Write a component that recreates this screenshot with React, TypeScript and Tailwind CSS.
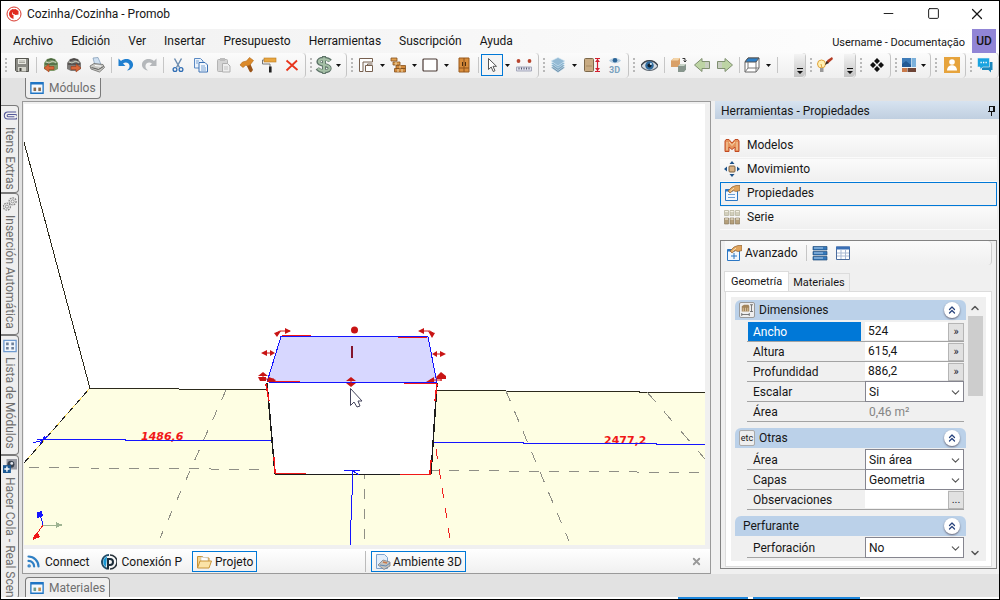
import { ReactNode, useState } from 'react';
import { ChevronDown, ChevronUp, ChevronsUp, Minus, Rss, Square, X } from 'lucide-react';

interface IconProps {
  children: ReactNode;
  size?: string;
}

function Icon({ children, size = 'w-4 h-4' }: IconProps) {
  return (
    <svg viewBox="0 0 16 16" className={`${size} shrink-0`} fill="none" aria-hidden="true">
      {children}
    </svg>
  );
}

const SaveIcon = () => (
  <Icon>
    <path d="M1.500 1.500h13v13h-12l-1-1z" fill="#8a8a84" stroke="#55554f" />
    <path d="M4 2h8v5H4z" fill="#e9e9e2" />
    <path d="M5 4h6M5 5.500h6" stroke="#a9a9a0" />
    <path d="M4 10h8v4.500H4z" fill="#d5d5cc" />
    <path d="M5.500 11h2v3h-2z" fill="#44443f" />
  </Icon>
);

// round module sphere with a red arrow, used for import and export
const ModuleIcon = ({ out = false }: { out?: boolean }) => (
  <Icon>
    <path d="M1 6l3-4 4-1 4 1 3 4v6l-4 2H5l-4-2z" fill={out ? '#7d7a78' : '#7f9a6a'} />
    <path d="M4 3.500l4-1.500 4 1.500M2 7h12" stroke={out ? '#4c4846' : '#4b6840'} strokeWidth="1.500" />
    <path d="M3 5l3 1 4-2 3 2" stroke="#c9d2c0" />
    {out ? (
      <path d="M5 9.500h5V7l5 4-5 4v-2.500H5z" fill="#d9683a" stroke="#a03c1a" strokeWidth=".6" />
    ) : (
      <path d="M11 9.500H6V7l-5 4 5 4v-2.500h5z" fill="#d9683a" stroke="#a03c1a" strokeWidth=".6" />
    )}
  </Icon>
);

const PrintIcon = () => (
  <Icon>
    <path d="M4 1l5-.5 3 7-6 1z" fill="#cfe0f1" stroke="#7d96b1" strokeWidth=".7" />
    <path d="M1 9l4-2.500 9 1 1.500 3-5 4.500L2 12z" fill="#c9c9c5" stroke="#6b6b68" strokeWidth=".8" />
    <path d="M2.500 10.500l7 2 5-3" stroke="#5c5c5a" />
    <path d="M6 8.500l6 .7" stroke="#fff" />
  </Icon>
);

const TurnIcon = ({ redo = false }: { redo?: boolean }) => (
  <Icon>
    {redo ? (
      <path d="M15.500 1.500v7.500H8.500l2.500-2.500C8.500 4.500 5 5.500 4.500 8.500c-.2 2 .5 3.500 2.500 5C3 13 .5 10 1 7 2 2 8.500.5 13 4z" fill="#b5b8bb" />
    ) : (
      <path d="M.5 1.500v7.500h7L5 6.500c2.500-2 6-1 6.500 2 .2 2-.5 3.500-2.500 5 4-.5 6.500-3.500 6-6.500C14 2 7.500.5 3 4z" fill="#1f7fd0" />
    )}
  </Icon>
);

const CutIcon = () => (
  <Icon>
    <path d="M4.500 1.500l5 9M11.500 1.500l-5 9" stroke="#6d8db0" strokeWidth="1.500" />
    <circle cx="5" cy="12.500" r="1.900" stroke="#2f6db4" strokeWidth="1.300" />
    <circle cx="11" cy="12.500" r="1.900" stroke="#2f6db4" strokeWidth="1.300" />
  </Icon>
);

const CopyIcon = () => (
  <Icon>
    <path d="M1.500 1.500h6l2.500 2.500v7H1.500z" fill="#eaf2fb" stroke="#5b8ac4" />
    <path d="M6 5.500h6l2.500 2.500v7H6z" fill="#f4f8fd" stroke="#3c72b5" />
    <path d="M8 9h4M8 11h5M8 13h5M3 4h3M3 6h2" stroke="#7ba3d3" />
  </Icon>
);

const PasteIcon = () => (
  <Icon>
    <rect x="1.500" y="2.500" width="10" height="12" rx="1" fill="#d4d4d4" stroke="#b4b4b4" />
    <path d="M4 1h5v3H4z" fill="#bdbdbd" />
    <path d="M6.500 6.500h5L14 9v6H6.500z" fill="#eee" stroke="#b0b0b0" />
    <path d="M8 10h4M8 12h4" stroke="#c4c4c4" />
  </Icon>
);

const HammerIcon = () => (
  <Icon>
    <path d="M7 7l3-3 4 9-2 2.500-1.500-1z" fill="#9a5418" />
    <path d="M1 8l2.500-3 4-1 3-3.500 4 3L11 8l-2.500 1L7 8l-3 2.500z" fill="#dc8a2a" stroke="#b06a1a" strokeWidth=".6" />
  </Icon>
);

const RollerIcon = () => (
  <Icon>
    <rect x="3" y="1" width="12" height="4" fill="#e8a640" stroke="#b97b1e" strokeWidth=".6" />
    <path d="M3 3H1.500v4H9v3" stroke="#777" />
    <rect x="8" y="9.500" width="2.600" height="6" fill="#222" />
  </Icon>
);

const DeleteIcon = () => (
  <Icon>
    <path d="M2.500 3.500l11 9.500M13 3.500l-10.500 10" stroke="#e8351c" strokeWidth="1.800" />
  </Icon>
);

const DollarIcon = () => (
  <Icon size="w-[18px] h-[18px]">
    <path d="M13.500 4.500C12 2.500 9.500 2.500 7.500 2.500c-3 0-4.500 1-4.500 2.700C3 9 13 7 13 10.800c0 1.700-2 2.700-5 2.700-2.500 0-4.500-.5-6-2.500M8 0v16" stroke="#5d7368" strokeWidth="3.600" />
    <path d="M13 4.700C12 3 9.500 2.800 7.500 2.800c-2.500 0-4 .8-4 2.300C3.500 8.500 13 7 13 10.800c0 1.600-2 2.400-5 2.400-2.300 0-4-.5-5.500-2.200M8 1v14" stroke="#a5c0a6" strokeWidth="2" />
  </Icon>
);

const PlanIcon = () => (
  <Icon>
    <path d="M1.500 14.500v-13h13V5H5v9.500z" fill="#fff" stroke="#77604f" />
    <path d="M7.500 8.500h7v6h-7z" fill="#fff" stroke="#77604f" />
    <path d="M9.500 8.500v-1.500h5" stroke="#77604f" />
  </Icon>
);

const BricksIcon = () => (
  <Icon>
    <path d="M1 1h6v3H1zM3 5h7v3H3z" fill="#e0a050" stroke="#85501c" strokeWidth=".8" />
    <path d="M6 8.500h9.500v3H6zM4.500 11.500h11v3.500h-11z" fill="#d28a3c" stroke="#85501c" strokeWidth=".8" />
    <path d="M10 8.500v3M8 12v3M12 12v3M6 5v3" stroke="#f3dcae" />
  </Icon>
);

const RectIcon = () => (
  <Icon>
    <rect x="1" y="2" width="14" height="12" rx="1" fill="#fff" stroke="#4b3a35" strokeWidth="1.200" />
  </Icon>
);

const CabinetIcon = () => (
  <Icon>
    <path d="M3 1h10v14H3z" fill="#d88d3c" stroke="#9a5a1c" />
    <path d="M8 1v14M3 11h10" stroke="#8f531a" />
    <path d="M6.500 5v4M9.500 5v4" stroke="#4c2d10" />
  </Icon>
);

const CursorIcon = () => (
  <Icon>
    <path d="M4.500 1.500v11l2.700-2.500 2 4.500 1.800-.8-2-4.400h3.500z" fill="#fff" stroke="#555" />
  </Icon>
);

const MeasureIcon = () => (
  <Icon>
    <path d="M.5 10h15v4H.5z" fill="#dfe2ee" stroke="#a4a7ba" />
    <path d="M3 10.500v2M5.500 10.500v2M8 10.500v2M10.500 10.500v2M13 10.500v2" stroke="#53576c" />
    <circle cx="2.500" cy="4" r="1.900" fill="#b8452e" />
    <circle cx="13.500" cy="4" r="1.900" fill="#b8452e" />
  </Icon>
);

const LayersIcon = () => (
  <Icon>
    <path d="M8 8l7 2.500L8 15.500 1 10.500z" fill="#6e93ae" stroke="#dcecf6" strokeWidth=".5" />
    <path d="M8 5.500l7 3L8 13.500 1 8.500z" fill="#7ba3be" stroke="#dcecf6" strokeWidth=".6" />
    <path d="M8 3l7 3.200-7 5-7-5z" fill="#86b2cf" stroke="#dcecf6" strokeWidth=".6" />
    <path d="M8 .5l7 3.500-7 5-7-5z" fill="#94bad4" stroke="#dcecf6" strokeWidth=".6" />
  </Icon>
);

const HeightIcon = () => (
  <Icon>
    <rect x="0.500" y="1.500" width="9" height="13" rx="1" fill="#c8ab83" stroke="#7d684a" />
    <path d="M2 9h6" stroke="#a88c64" />
    <path d="M11 1.500h5M11 14.500h5M13.500 2v12" stroke="#d31f2f" strokeWidth="1.200" />
    <path d="M11 5l2.500-3L16 5M11 11l2.500 3 2.500-3" fill="#d31f2f" />
  </Icon>
);

const View3dIcon = () => (
  <Icon>
    <path d="M2 3.500C5 0 11 0 14 3.500 11 7 5 7 2 3.500z" fill="#b8d0e2" />
    <circle cx="8" cy="3.300" r="2.300" fill="#2c6496" />
    <text x="2" y="15.500" fontSize="9" fontWeight="700" fontFamily="Roboto" fill="#7aa2bf">3D</text>
  </Icon>
);

const EyeIcon = () => (
  <Icon size="w-[17px] h-[17px]">
    <path d="M0 8.500C4 2 12 2 16 8.500 12 14 4 14 0 8.500z" fill="#d5dbe2" stroke="#5f6872" />
    <path d="M0 8C4 2 12 2 16 8" stroke="#3e444c" strokeWidth="1.200" />
    <circle cx="8" cy="8" r="4" fill="#2f6b9e" />
    <circle cx="8" cy="8" r="1.900" fill="#10202f" />
    <circle cx="9.300" cy="6.500" r="1" fill="#cfe3f3" />
  </Icon>
);

const ReplaceIcon = () => (
  <Icon>
    <path d="M0 3.500L3 1h6v6l-2 3H0z" fill="#d9a068" />
    <path d="M0 3.500L3 1h6L7 3.500z" fill="#f3d4a8" />
    <path d="M7 9l3-2h5v5.500L13 15H7z" fill="#87968d" />
    <path d="M7 9l3-2h5l-2 2z" fill="#c8d4c8" />
    <path d="M11.500 1.500H14v3M12.500 3.500L14 5l1.500-1.500" stroke="#333" />
  </Icon>
);

const GreenArrow = ({ right = false }: { right?: boolean }) => (
  <Icon>
    <path
      d={right ? 'M.5 4.500H8V1.500l7.500 6.500L8 14.500v-3H.5z' : 'M15.500 4.500H8V1.500L.5 8 8 14.500v-3h7.500z'}
      fill="#bdd4a4"
      stroke="#7f8f70"
    />
    <path d={right ? 'M1 5h4v6H1z' : 'M11 5h4v6h-4z'} fill="#c9cfc2" />
  </Icon>
);

const CubeIcon = () => (
  <Icon>
    <path d="M1 5l3-4h11v10l-3 4H1z" fill="#fff" stroke="#666" />
    <path d="M1 5l3-4h11l-3 4z" fill="#2e80c9" stroke="#555" />
    <path d="M12 5v10M4 5v6h11M4 11l-3 4" stroke="#777" />
  </Icon>
);

const BulbIcon = () => (
  <Icon>
    <circle cx="4.500" cy="7" r="4" fill="#fff1b5" stroke="#e0a23a" />
    <path d="M3 11h3.500v4H3z" fill="#999" />
    <path d="M4 7l1 4" stroke="#e0a23a" />
    <path d="M8.500 6.500l2-3.500L15 0l1 2-4.500 4z" fill="#b43b22" />
    <path d="M8 8l1.500-4 2.500 2z" fill="#3c2c20" />
  </Icon>
);

const DiamondsIcon = () => (
  <Icon>
    <path d="M8 1l3 3-3 3-3-3zM8 9l3 3-3 3-3-3zM4 5l3 3-3 3-3-3zM12 5l3 3-3 3-3-3z" fill="#111" />
  </Icon>
);

const PaletteIcon = () => (
  <Icon>
    <path d="M1 1h9v9H1z" fill="#3f7cb8" />
    <path d="M10.500 1H15v9h-4.500z" fill="#7bb0da" />
    <path d="M1 11h5v4H1z" fill="#c97a4a" />
    <path d="M6.500 11h8.500v4H6.500z" fill="#6d4436" />
    <path d="M1 7l4-3 5 4v2H1z" fill="#235a94" />
  </Icon>
);

const UserIcon = () => (
  <Icon>
    <path d="M0 0h16v16H0z" fill="#e6a33c" />
    <circle cx="8" cy="5" r="2.800" fill="#fff" />
    <path d="M3 13.500c0-7 10-7 10 0z" fill="#fff" />
  </Icon>
);

const ChatIcon = () => (
  <Icon>
    <path d="M5 5h10.500v8H14v2.500L11.500 13H5z" fill="#1b87bd" />
    <path d="M.5 1h12v9H6l-3 2.500V10H.5z" fill="#19a3e0" stroke="#f4f4f4" strokeWidth=".6" />
    <path d="M3.500 5.500h1.300M6 5.500h1.300M8.500 5.500h1.300" stroke="#fff" strokeWidth="1.400" />
  </Icon>
);

const WindowIcon = ({ left = '#8b6b4c', right = '#8b6b4c' }) => (
  <Icon size="w-[14px] h-[14px]">
    <path d="M1 2h14v12H1z" fill="#f4f8fc" stroke="#1f74c4" strokeWidth="1.500" />
    <path d="M1 3h14" stroke="#1f74c4" strokeWidth="2" />
    <path d="M4 7.500h3v4H4z" fill={left} />
    <path d="M9.500 7.500h3v4h-3z" fill={right} />
  </Icon>
);

const ListIcon = () => (
  <Icon size="w-[14px] h-[14px]">
    <path d="M1 1.500h14v13H1z" fill="#f0f5fb" stroke="#6f9bd0" strokeWidth="1.500" />
    <path d="M3.500 4h3v3h-3zM3.500 9h3v3h-3zM9.500 4h3v3h-3zM9.500 9h3v3h-3z" fill="#6d7f98" />
  </Icon>
);

const ModelsIcon = () => (
  <Icon>
    <path d="M1 14.500V4l1-1.500h3L8 6l3-3.500h3L15 4v10.500h-4V10l-3 2.500L5 10v4.500z" fill="#e6935c" stroke="#c24a22" />
    <path d="M3 13V5M13 13V5M5 5l3 3.500L11 5" stroke="#f7d8ae" />
  </Icon>
);

const MoveIcon = () => (
  <Icon>
    <path d="M8 0l2.500 3h-5zM8 16l2.500-3h-5zM0 8l3-2.500v5zM16 8l-3-2.500v5z" fill="#1e5289" />
    <rect x="5" y="5" width="6" height="6" rx="1" fill="#d8b184" stroke="#7b6040" />
  </Icon>
);

const PropertiesIcon = ({ plus = false }: { plus?: boolean }) => (
  <Icon>
    <path d="M1.500 4.500h12v11h-12z" fill="#f2f7fd" stroke="#2b77c4" />
    <path d="M1.500 5.500H9" stroke="#2b77c4" strokeWidth="2" />
    {plus ? <path d="M8 8v6M5 11h6" stroke="#2b77c4" /> : <path d="M4 9.500h7M4 12.500h7" stroke="#6aa0d8" />}
    <path d="M4 6l4-4 4-1.500h4v5l-4 1-3-1-3 2.500z" fill="#dfa35c" stroke="#8f6230" strokeWidth=".7" />
    <path d="M6.500 6l3.500-3" stroke="#fbe3b8" />
  </Icon>
);

const SeriesIcon = () => (
  <Icon>
    <path d="M.5 1.500h4v5h-4zM6 1.500h4v5H6zM11.500 1.500h4v5h-4z" fill="#d2cfbd" stroke="#aba78f" strokeWidth=".6" />
    <path d="M.5 9h4v6h-4zM6 9h4v6H6zM11.500 9h4v6h-4z" fill="#b5a07c" stroke="#837355" strokeWidth=".6" />
    <path d="M1 2.500h3M6.500 2.500h3M12 2.500h3M1 10h3M6.500 10h3M12 10h3" stroke="#f4f1e4" />
  </Icon>
);

const RowsIcon = () => (
  <Icon>
    <path d="M1 1.500h14v3.500H1zM1 6.500h14V10H1zM1 11.500h14V15H1z" fill="#3579bb" stroke="#234f7d" strokeWidth=".7" />
    <path d="M2 3h9M2 8h9M2 13h9" stroke="#b7d3ee" />
  </Icon>
);

const TableIcon = () => (
  <Icon>
    <path d="M1.500 2h13v12.500h-13z" fill="#fff" stroke="#4a6c9e" />
    <path d="M1 3h14" stroke="#3a6fb5" strokeWidth="3" />
    <path d="M6 5v9M10.500 5v9M2 8h12M2 11h12" stroke="#a9b9d3" />
  </Icon>
);

const FolderIcon = () => (
  <Icon>
    <path d="M1.500 14V2.500h5l1 1.500H13v3" fill="#f5d590" stroke="#c99437" />
    <path d="M5 3l7 1v4H5z" fill="#fff" stroke="#bbb" strokeWidth=".5" />
    <path d="M1.500 14L4 7h11.500L13 14z" fill="#fbe3a7" stroke="#c99437" />
  </Icon>
);

const AmbientIcon = () => (
  <Icon>
    <path d="M1.500.5h8l3 3v11h-11z" fill="#e3eefb" stroke="#7ca2cf" />
    <path d="M3 11l5-5 7 2v4l-6 3.500z" fill="#c3c3c0" stroke="#74747a" strokeWidth=".7" />
    <path d="M5 11l6 1 4-3" stroke="#5f87b3" />
    <path d="M8 8l4 1" stroke="#c97a4a" strokeWidth="1.400" />
  </Icon>
);

const PromobIcon = () => (
  <Icon>
    <path d="M8 1a7 7 0 0 0-2 13.700" stroke="#1f4a66" strokeWidth="2" />
    <path d="M6 2.500a6 6 0 0 0-1 10.500z" fill="#1697d4" />
    <path d="M9 1a7 7 0 0 1 0 14" stroke="#27323a" strokeWidth="1.500" />
    <path d="M7 15.500V5h2a3 3 0 0 1 0 6H7" stroke="#1c2d39" strokeWidth="2" />
  </Icon>
);

const AppLogo = () => (
  <Icon>
    <circle cx="8" cy="8" r="7" fill="#fff" stroke="#d8362b" strokeWidth="1" />
    <path d="M7.500 3v10C5 12.500 3 10.500 3 8c0-2.500 2-5 4.500-5z" fill="#e02a20" />
    <path d="M7 3.500L9.500 3l3 2v3.500L9.500 9 7 8z" fill="#e02a20" />
    <path d="M6.500 6.500v2h2" stroke="#fff" strokeWidth=".8" />
  </Icon>
);

const ClipIcon = () => (
  <Icon size="w-[14px] h-[14px]">
    <path d="M15 3.500H5.500a4 4 0 0 0 0 8H14a2.600 2.600 0 0 0 0-5.200H6a1.300 1.300 0 0 0 0 2.600h7" stroke="#55589a" strokeWidth="1.200" />
  </Icon>
);

const GearsIcon = () => (
  <Icon size="w-[14px] h-[14px]">
    <circle cx="11" cy="5" r="4" stroke="#888" strokeWidth="1.500" strokeDasharray="2 1" />
    <circle cx="11" cy="5" r="1.800" stroke="#888" />
    <circle cx="4.500" cy="11" r="4" stroke="#888" strokeWidth="1.500" strokeDasharray="2 1" />
    <circle cx="4.500" cy="11" r="1.800" stroke="#888" />
  </Icon>
);

const GlueIcon = () => (
  <Icon size="w-[14px] h-[14px]">
    <path d="M4 0h12v12H4z" fill="#9a9ca4" />
    <circle cx="9" cy="6" r="4" fill="#39424f" />
    <circle cx="10" cy="5" r="1.600" fill="#e5eaf2" />
    <path d="M0 7h9v9H0z" fill="#1d5a94" />
    <path d="M4.500 8.500v6M1.500 11.500h6" stroke="#fff" strokeWidth="1.600" />
  </Icon>
);

function ToolGroup({ children, className = '' }: { children: ReactNode; className?: string }) {
  return (
    <div className={`flex h-[25px] shrink-0 items-center rounded-r border-r border-[#c4c4c4] bg-linear-to-b from-[#fbfbfb] to-[#efefef] pb-px ${className}`}>
      <span className="flex w-[9px] shrink-0 flex-col items-center gap-[2px]">
        {[0, 1, 2, 3].map((dot) => (
          <i key={dot} className="h-[2px] w-[2px] bg-[#b9b9b9]" />
        ))}
      </span>
      {children}
    </div>
  );
}

function Tool({ label, children, className = 'w-[23px]' }: { label: string; children: ReactNode; className?: string }) {
  return (
    <button type="button" aria-label={label} className={`flex h-[22px] shrink-0 items-center justify-center ${className}`}>
      {children}
    </button>
  );
}

function Caret({ className = 'w-3' }: { className?: string }) {
  return (
    <button type="button" aria-label="Más" className={`flex h-[22px] shrink-0 items-center justify-center ${className}`}>
      <svg viewBox="0 0 5 3" className="h-[3px] w-[5px]">
        <path d="M0 0h5L2.500 3z" fill="#111" />
      </svg>
    </button>
  );
}

const Divider = () => (
  <span className="flex w-[6px] shrink-0 justify-center">
    <i className="h-4 w-px bg-[#c6c6c6]" />
  </span>
);

const Overflow = () => (
  <button type="button" aria-label="Opciones de barra" className="flex h-[23px] w-[11px] shrink-0 items-end justify-center rounded-br bg-linear-to-b from-[#f4f4f4] to-[#c4c4c4] pb-[3px]">
    <svg viewBox="0 0 6 6" className="h-[6px] w-[6px]">
      <path d="M0 0h6v1H0zM0 3h6L3 6z" fill="#111" />
    </svg>
  </button>
);

function Toolbar() {
  return (
    <div className="flex h-[25px] shrink-0 overflow-hidden bg-[#f4f4f4]">
      <ToolGroup className="pr-[2px]">
        <Tool label="Guardar"><SaveIcon /></Tool>
        <Divider />
        <Tool label="Importar"><ModuleIcon /></Tool>
        <Tool label="Exportar"><ModuleIcon out /></Tool>
        <Tool label="Imprimir"><PrintIcon /></Tool>
        <Divider />
        <Tool label="Deshacer"><TurnIcon /></Tool>
        <Tool label="Rehacer"><TurnIcon redo /></Tool>
        <Divider />
        <Tool label="Cortar"><CutIcon /></Tool>
        <Tool label="Copiar"><CopyIcon /></Tool>
        <Tool label="Pegar"><PasteIcon /></Tool>
        <Tool label="Construir"><HammerIcon /></Tool>
        <Tool label="Pintar" className="w-[22px]"><RollerIcon /></Tool>
        <Tool label="Eliminar"><DeleteIcon /></Tool>
      </ToolGroup>
      <ToolGroup className="pr-[3px]">
        <Tool label="Presupuesto" className="w-[18px]"><DollarIcon /></Tool>
        <Caret className="w-[10px]" />
      </ToolGroup>
      <ToolGroup className="pr-[3px]">
        <Tool label="Paredes" className="w-5"><PlanIcon /></Tool>
        <Caret />
        <Tool label="Ladrillos" className="w-5"><BricksIcon /></Tool>
        <Caret />
        <Tool label="Forma" className="w-5"><RectIcon /></Tool>
        <Caret />
        <Tool label="Puertas"><CabinetIcon /></Tool>
        <Divider />
        <Tool label="Seleccionar" className="w-[22px] border border-[#0078d7] bg-[#f4f4f4]"><CursorIcon /></Tool>
        <Caret className="w-[9px]" />
        <Tool label="Medir"><MeasureIcon /></Tool>
      </ToolGroup>
      <ToolGroup className="pr-[2px]">
        <Tool label="Capas" className="w-5"><LayersIcon /></Tool>
        <Caret />
        <Tool label="Altura"><HeightIcon /></Tool>
        <Tool label="Vista 3D"><View3dIcon /></Tool>
      </ToolGroup>
      <ToolGroup className="w-[177px]">
        <Tool label="Visualizar"><EyeIcon /></Tool>
        <Divider />
        <Tool label="Reemplazar"><ReplaceIcon /></Tool>
        <Tool label="Anterior"><GreenArrow /></Tool>
        <Tool label="Siguiente"><GreenArrow right /></Tool>
        <Divider />
        <Tool label="Perspectiva" className="w-5"><CubeIcon /></Tool>
        <Caret />
        <Divider />
        <span className="grow" />
        <Overflow />
      </ToolGroup>
      <ToolGroup className="w-[50px]">
        <Tool label="Iluminación" className="w-5"><BulbIcon /></Tool>
        <span className="grow" />
        <Overflow />
      </ToolGroup>
      <ToolGroup className="pr-[2px]">
        <Tool label="Módulos"><DiamondsIcon /></Tool>
      </ToolGroup>
      <ToolGroup className="pr-[2px]">
        <Tool label="Materiales" className="w-[18px]"><PaletteIcon /></Tool>
        <Caret className="w-[10px]" />
      </ToolGroup>
      <ToolGroup className="pr-[2px]">
        <Tool label="Usuario"><UserIcon /></Tool>
      </ToolGroup>
      <ToolGroup className="grow">
        <Tool label="Chat" className="w-5"><ChatIcon /></Tool>
      </ToolGroup>
    </div>
  );
}

const menus = ['Archivo', 'Edición', 'Ver', 'Insertar', 'Presupuesto', 'Herramientas', 'Suscripción', 'Ayuda'];

const sideTabs = [
  { label: 'Itens Extras', icon: <ClipIcon />, height: 'h-[88px]' },
  { label: 'Inserción Automática', icon: <GearsIcon />, height: 'h-[142px]' },
  { label: 'Lista de Módulos', icon: <ListIcon />, height: 'h-[120px]' },
  { label: 'Hacer Cola - Real Scen', icon: <GlueIcon />, height: 'grow' },
];

// arrow handles around the selected module: shaft first, then the two heads
const handles = [
  { shaft: 'M276 333l4-2h10', heads: 'M285 328l6 3-6 3zM281 331l-7 2 3 4z' },
  { shaft: 'M421 331h9l3 2', heads: 'M424 328l-6 3 6 3zM428 331l7 2-3 5z' },
  { shaft: 'M263 353h10', heads: 'M267 350l-6 3 6 3zM270 350l5 3-5 3z' },
  { shaft: 'M434 354h9', heads: 'M437 351l-5 3 5 3zM440 351l6 3-6 3z' },
  { shaft: 'M263 374v7M260 379h14', heads: 'M258 376l5-4 5 4zM258 377h8v4h-6zM269 377l7 3-2 2h-7z' },
  { shaft: 'M441 374v7M430 380h12', heads: 'M436 377l5-5 5 4v3h-9zM434 377v5h-8z' },
  { shaft: 'M351 378v8', heads: 'M346 381l5-4 5 4zM346 383l5 4 5-4z' },
];

function Viewport() {
  return (
    <svg viewBox="24 104 681 441" preserveAspectRatio="xMinYMin slice" className="min-h-0 w-full flex-1 bg-white" shapeRendering="crispEdges" role="img" aria-label="Vista 3D">
      <path d="M24 463L90 388l616 5v152H24z" fill="#fefee3" />
      <path d="M24 463L90 388" stroke="#f0d050" />
      <path d="M24 463L90 388" stroke="#222" strokeDasharray="7 4" />
      <path d="M24 142L90 388.500M90 388.500l176 1M437 390.500l268 2" stroke="#2c2a1c" fill="none" />
      <g stroke="#8f8f86" fill="none">
        <path d="M29 467.500l240 2M429 470.500l276 2" strokeDasharray="10 10" />
        <path d="M226 390l-66 148M506 391l63 150" strokeDasharray="11 11" />
        <path d="M647 392l58 67" strokeDasharray="13 13" />
        <path d="M364.500 475v70" strokeDasharray="10 10" strokeDashoffset="6" />
      </g>
      <path d="M436 449l14 90" stroke="#f02020" strokeDasharray="10 10" />
      <g fill="#f01818" fontFamily="DejaVu Sans" fontWeight="700" fontSize="11">
        <text x="141" y="440" fontStyle="italic">1486,6</text>
        <text x="604" y="444">2477,2</text>
      </g>
      <path d="M40 439.500h85v1h147M434 442.500h89v1h133v1h49" stroke="#1414ff" fill="none" />
      <path d="M33 443l10-3 6-5M37 440l8-1M40 444l5-8" stroke="#1414ff" fill="none" />
      <path d="M267 383h170l-6 92H275z" fill="#fff" />
      <path d="M267 383l8 91M437 383l-6 91" stroke="#1c1c1c" strokeWidth="1.500" />
      <path d="M275 474.500h156" stroke="#1c1c1c" />
      <path d="M266 384l3 17M274 457l1 16M275 473.500h31M437 384l-2 17M431 460l-1 14M400 474.500h31" stroke="#f01818" strokeWidth="1.500" />
      <path d="M281 336.500l147 .5 9 46-170-1z" fill="#d7d7ff" stroke="#1414ff" />
      <path d="M282 335.500h29M398 337.500h29M267 381.500h33M404 383.500h33" stroke="#f01818" />
      <g shapeRendering="auto">
        {handles.map((handle) => (
          <g key={handle.shaft}>
            <path d={handle.shaft} stroke="#d01414" fill="none" />
            <path d={handle.heads} fill="#c81414" />
          </g>
        ))}
        <circle cx="354.500" cy="330" r="3.500" fill="#c81414" />
      </g>
      <path d="M352 346v12" stroke="#84142c" strokeWidth="2" />
      <path d="M344 470.500h16M353 471l6 4M353 471l-3 74" stroke="#1414ff" fill="none" />
      <path d="M350.500 388.500v17l3.500-3.500 3 5 3-1-2-5h4z" fill="#fff" stroke="#44445c" shapeRendering="auto" />
      <path d="M43 525l-3-11" stroke="#1414ff" />
      <path d="M37 512l5-1 1 5-6 2z" fill="#1414ff" />
      <path d="M43 525h14" stroke="#9fb492" />
      <path d="M56 522l7 3-7 3z" fill="#9fb492" />
      <path d="M43 525l-7 10" stroke="#f01818" />
      <path d="M34 535l4-2 2 4-7 3z" fill="#f01818" />
    </svg>
  );
}

function Section({ title, icon, children }: { title: string; icon?: ReactNode; children: ReactNode }) {
  return (
    <section className="flex flex-col gap-[2px]">
      <header className="flex h-5 items-center gap-1 rounded-t-md bg-[#bbd1e9] pr-[6px] pb-px pl-1">
        {icon}
        <h3 className={icon ? '' : 'pl-1'}>{title}</h3>
        <button type="button" aria-label={`Contraer ${title}`} className="ml-auto flex h-4 w-4 items-center justify-center rounded-full bg-white shadow-[0_1px_2px_#667]">
          <ChevronsUp size={12} strokeWidth={2.5} color="#27427c" />
        </button>
      </header>
      <div className="pr-[2px] pl-3">{children}</div>
    </section>
  );
}

interface FieldProps {
  label: string;
  value?: string;
  kind?: 'text' | 'select' | 'static';
  action?: string;
  active?: boolean;
}

function Field({ label, value = '', kind = 'text', action = '»', active = false }: FieldProps) {
  const id = `campo-${label}-${kind}-${value}`.replace(/\s/g, '');
  return (
    <div className="flex h-5 border-b border-[#a3a3a3]">
      <label htmlFor={id} className={`mr-1 w-[114px] shrink-0 border-l border-[#f0f0f0] pl-[5px] leading-5 ${active ? 'bg-[#0078d7] text-white' : ''}`}>
        {label}
      </label>
      {kind === 'text' && (
        <>
          <input id={id} defaultValue={value} className="h-[18px] w-0 min-w-0 grow bg-white pl-[3px] outline-none" />
          <button type="button" aria-label={`Editar ${label}`} className="h-[18px] w-4 shrink-0 self-end border border-[#b5b5b5] bg-[#e1e1e1] text-[11px] leading-4 text-[#223]">
            {action}
          </button>
        </>
      )}
      {kind === 'select' && (
        <span className="relative -my-px grow">
          <select id={id} className="h-[21px] w-full appearance-none border border-[#85858f] bg-white pl-[3px] leading-4 outline-none">
            <option>{value}</option>
          </select>
          <ChevronDown size={13} strokeWidth={2} color="#555" className="pointer-events-none absolute top-[5px] right-[2px]" />
        </span>
      )}
      {kind === 'static' && <output id={id} className="pl-1 leading-5 text-[#858585]">{value}</output>}
    </div>
  );
}

const panelItems = [
  { label: 'Modelos', icon: <ModelsIcon /> },
  { label: 'Movimiento', icon: <MoveIcon /> },
  { label: 'Propiedades', icon: <PropertiesIcon /> },
  { label: 'Serie', icon: <SeriesIcon /> },
];

function PropertiesPanel() {
  const [selected, setSelected] = useState('Propiedades');

  return (
    <aside className="mb-[23px] flex w-[284px] shrink-0 flex-col bg-[#f0f0f0] pb-[5px]">
      <header className="flex h-[18px] shrink-0 items-center justify-between bg-linear-to-b from-[#d7e3f0] to-[#c0cfe0] pr-[3px] pl-[6px]">
        <h2 className="pt-px">Herramientas - Propiedades</h2>
        <button type="button" aria-label="Fijar panel">
          <svg viewBox="0 0 9 11" className="h-[11px] w-[9px]" fill="none" shapeRendering="crispEdges">
            <path d="M2.500 6V1.500h4V6M1 6.500h7M4.500 7v4" stroke="#111" />
            <path d="M6 1h1.500v5H6z" fill="#111" />
          </svg>
        </button>
      </header>
      <nav className="mt-[15px] flex shrink-0 flex-col pr-[2px] pl-[5px]">
        {panelItems.map((item) => (
          <button
            key={item.label}
            type="button"
            onClick={() => setSelected(item.label)}
            className={`flex h-6 items-center gap-[7px] border pb-[2px] pl-[3px] text-left ${
              item.label === selected ? 'border-[#0078d7] bg-[#f0f0f0]' : 'border-transparent bg-linear-to-b from-[#fbfbfb] to-[#f0f0f0]'
            }`}
          >
            {item.icon}
            {item.label}
          </button>
        ))}
      </nav>
      <div className="mt-[10px] mr-[2px] ml-[5px] flex min-h-0 grow flex-col border border-[#828282] px-1">
        <div className="flex h-6 shrink-0 items-center rounded-r border-r border-[#ccc] bg-linear-to-b from-[#fafafa] to-[#f0f0f0] pl-px">
          <button type="button" className="flex items-center gap-[3px]">
            <PropertiesIcon plus />
            Avanzado
          </button>
          <i className="mr-[5px] ml-2 h-4 w-px bg-[#c6c6c6]" />
          <button type="button" aria-label="Lista" className="mr-[7px]"><RowsIcon /></button>
          <button type="button" aria-label="Tabla"><TableIcon /></button>
        </div>
        <div className="mt-[6px] -ml-px flex shrink-0 items-end" role="tablist">
          <button type="button" role="tab" aria-selected="true" className="-mb-px h-[21px] border border-b-0 border-[#dcdcdc] bg-white px-[6px] text-[11px]">Geometría</button>
          <button type="button" role="tab" aria-selected="false" className="h-[18px] border border-b-0 border-l-0 border-[#dcdcdc] px-1 text-[11px]">Materiales</button>
        </div>
        <div className="mb-px flex min-h-0 grow border border-[#dcdcdc] bg-white p-[5px]">
          <div className="flex min-h-0 grow overflow-hidden bg-[#f0f0f0] pt-[3px] pl-1">
            <div className="flex w-0 grow flex-col gap-[6px]">
              <Section
                title="Dimensiones"
                icon={
                  <span className="flex h-4 w-4 items-center justify-center rounded-xs border border-[#999] bg-[#eee]">
                    <Icon size="w-3 h-3">
                      <path d="M1 3l3-2h6l1 2v7H1z" fill="#a3855c" />
                      <path d="M3 5v5M6 5v5M9 5v5" stroke="#e7d2ac" />
                      <path d="M12 1h4M12 10h4M14 1v9M1 12v4M11 12v4M1 14h10" stroke="#555" />
                    </Icon>
                  </span>
                }
              >
                <Field label="Ancho" value="524" active />
                <Field label="Altura" value="615,4" />
                <Field label="Profundidad" value="886,2" />
                <Field label="Escalar" value="Si" kind="select" />
                <Field label="Área" value="0,46 m²" kind="static" />
              </Section>
              <Section
                title="Otras"
                icon={<span className="flex h-4 w-4 items-center justify-center rounded-xs border border-[#aaa] bg-[#eee] text-[9px] leading-3">etc</span>}
              >
                <Field label="Área" value="Sin área" kind="select" />
                <Field label="Capas" value="Geometria" kind="select" />
                <Field label="Observaciones" action="..." />
              </Section>
              <Section title="Perfurante">
                <Field label="Perforación" value="No" kind="select" />
              </Section>
            </div>
            <div className="mr-[3px] ml-[1px] flex w-4 shrink-0 flex-col items-center" aria-hidden="true">
              <ChevronUp size={12} strokeWidth={3} color="#555" className="my-[2px]" />
              <div className="h-20 w-[15px] bg-[#cdcdcd]" />
              <ChevronDown size={12} strokeWidth={3} color="#555" className="mt-auto mb-[2px]" />
            </div>
          </div>
        </div>
      </div>
    </aside>
  );
}

const dockTab = 'flex items-center gap-[5px] border-[#7a7a7a] bg-[#efefef] px-1 text-[#6e6e6e]';

export default function App() {
  return (
    <div className="flex h-screen min-h-[600px] flex-col border border-black bg-[#e2e2e2] font-['Roboto','Liberation_Sans',sans-serif] text-[12px] leading-4 text-[#161616]">
      <header className="flex h-7 shrink-0 items-center bg-white pb-[3px] pl-[5px]">
        <AppLogo />
        <h1 className="ml-[5px] grow">Cozinha/Cozinha - Promob</h1>
        <button type="button" aria-label="Minimizar" className="flex w-[46px] justify-center"><Minus size={15} strokeWidth={1.5} /></button>
        <button type="button" aria-label="Maximizar" className="flex w-[44px] justify-center"><Square size={13} strokeWidth={1.8} /></button>
        <button type="button" aria-label="Cerrar" className="flex w-[44px] justify-center"><X size={18} strokeWidth={1.6} /></button>
      </header>

      <div className="flex h-6 shrink-0 items-center bg-linear-to-r from-[#f0f0f0] to-white pl-3">
        <nav className="flex grow gap-[18px]">
          {menus.map((menu) => (
            <button key={menu} type="button">{menu}</button>
          ))}
        </nav>
        <span className="mr-[7px] pt-[3px] text-[11px]">Username - Documentação</span>
        <span className="mr-[3px] flex h-6 w-6 items-center justify-center bg-[#9185d6] font-medium">UD</span>
      </div>

      <Toolbar />

      <div className="flex min-h-0 grow">
        <div className="flex w-[21px] shrink-0 flex-col pt-[27px]">
          {sideTabs.map((tab) => (
            <button
              key={tab.label}
              type="button"
              className={`flex w-[18px] shrink-0 items-center gap-1 rounded-r border border-l-0 border-[#7a7a7a] bg-[#efefef] pt-[3px] text-[#6e6e6e] [writing-mode:vertical-rl] ${tab.height}`}
            >
              {tab.icon}
              <span className="whitespace-nowrap">{tab.label}</span>
            </button>
          ))}
        </div>

        <div className="flex min-w-0 grow flex-col">
          <div className="h-[23px] shrink-0 pl-[3px]">
            <button type="button" className={`${dockTab} h-[21px] rounded-b border border-t-0`}>
              <WindowIcon />
              Módulos
            </button>
          </div>
          <main className="flex min-h-0 grow flex-col border border-[#9a9a9a] bg-[#f0f0f0] pt-[2px] pl-px">
            <div className="flex min-h-0 grow flex-col pr-[5px]">
              <Viewport />
            </div>
            <div className="mt-1 flex h-6 shrink-0 items-center bg-linear-to-b from-white to-[#f0f0f0] pt-px">
              <div className="flex w-[342px] items-center border-r border-[#bbb]">
                <button type="button" className="flex h-[21px] items-center gap-1 pl-[2px]">
                  <Rss size={15} strokeWidth={3.5} color="#2f7fc4" />
                  Connect
                </button>
                <button type="button" className="ml-3 flex h-[21px] items-center gap-1">
                  <PromobIcon />
                  Conexión P
                </button>
                <button type="button" className="ml-[10px] flex h-[21px] items-center gap-[3px] border border-[#0078d7] px-[3px]">
                  <FolderIcon />
                  Projeto
                </button>
              </div>
              <button type="button" className="ml-[5px] flex h-[21px] items-center gap-[2px] border border-[#0078d7] px-[3px]">
                <AmbientIcon />
                Ambiente 3D
              </button>
              <button type="button" aria-label="Cerrar vista" className="mr-2 ml-auto"><X size={11} strokeWidth={4} color="#999" /></button>
            </div>
          </main>
          <div className="h-[23px] shrink-0 pt-[3px] pl-[3px]">
            <button type="button" className={`${dockTab} h-5 rounded-t border border-b-0`}>
              <WindowIcon left="#6f9c8a" right="#c98f4a" />
              Materiales
            </button>
          </div>
        </div>

        <div className="flex shrink-0 bg-[#e2e2e2] pt-[23px]">
          <i className="mb-[23px] w-1 bg-[#f0f0f0]" />
          <PropertiesPanel />
        </div>
      </div>

      <footer className="flex h-[2px] shrink-0 gap-[5px] bg-white pl-[677px]">
        <i className="w-[70px] bg-[#1c86dc]" />
        <i className="w-[107px] bg-[#1c86dc]" />
      </footer>
    </div>
  );
}
